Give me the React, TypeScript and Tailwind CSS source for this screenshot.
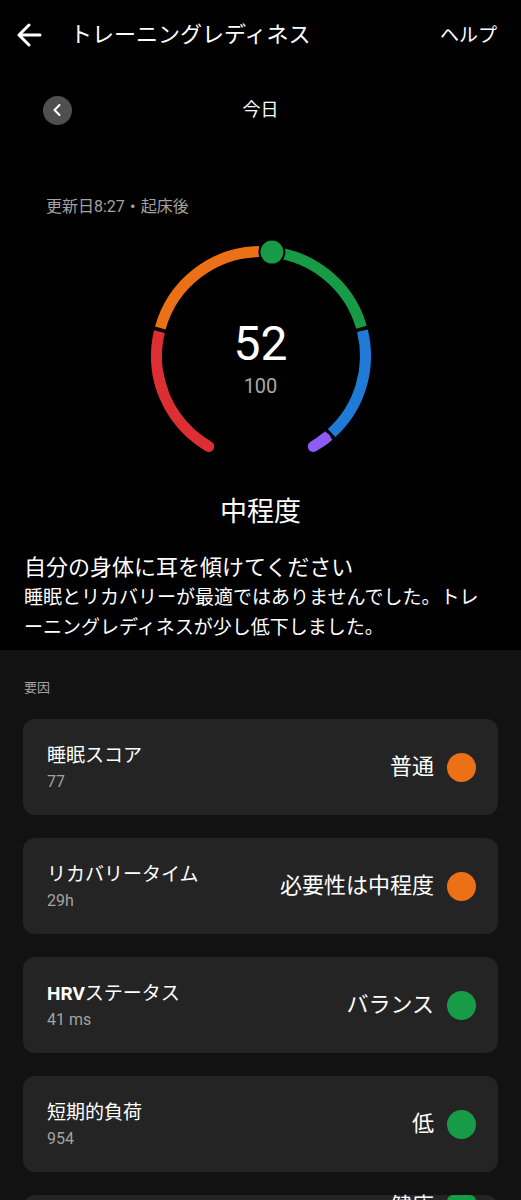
import { ChevronLeft } from "lucide-react";

const CX = 120;
const CY = 120;
const R = 104.5;

function pt(deg: number) {
  const a = (deg * Math.PI) / 180;
  return `${(CX + R * Math.sin(a)).toFixed(2)} ${(CY - R * Math.cos(a)).toFixed(2)}`;
}

function arc(from: number, to: number) {
  const large = to - from > 180 ? 1 : 0;
  return `M ${pt(from)} A ${R} ${R} 0 ${large} 1 ${pt(to)}`;
}

const factors = [
  { name: "睡眠スコア", value: "77", status: "普通", color: "bg-[#ec7016]" },
  { name: "リカバリータイム", value: "29h", status: "必要性は中程度", color: "bg-[#ec7016]" },
  { name: "HRVステータス", value: "41 ms", status: "バランス", color: "bg-[#179b47]" },
  { name: "短期的負荷", value: "954", status: "低", color: "bg-[#179b47]" },
];

function Gauge() {
  const a = (6 * Math.PI) / 180;
  const dot = { x: CX + R * Math.sin(a), y: CY - R * Math.cos(a) };
  return (
    <div className="relative mx-auto w-[240px] h-[240px]">
      <svg width="240" height="240" viewBox="0 0 240 240" fill="none">
        <path d={arc(-150, -100)} stroke="#dc2f33" strokeWidth="11" strokeLinecap="round" />
        <path d={arc(-110, -76.5)} stroke="#dc2f33" strokeWidth="11" />
        <path d={arc(-74.5, -1)} stroke="#ec7016" strokeWidth="11" />
        <path d={arc(1, 74)} stroke="#179b47" strokeWidth="11" />
        <path d={arc(76, 137.5)} stroke="#1f7ad8" strokeWidth="11" />
        <path d={arc(139.5, 145)} stroke="#8c5cf5" strokeWidth="11" />
        <path d={arc(142, 150)} stroke="#8c5cf5" strokeWidth="11" strokeLinecap="round" />
        <circle cx={dot.x} cy={dot.y} r="13.5" fill="#000" />
        <circle cx={dot.x} cy={dot.y} r="11.5" fill="#179b47" />
      </svg>
      <div className="absolute inset-0 flex flex-col items-center pt-[82px]">
        <span className="text-[48px] leading-[52px] text-white font-['Roboto',sans-serif]">52</span>
        <span className="text-[20px] leading-[24px] text-[#a8a8a8] font-['Roboto',sans-serif] mt-[4px]">100</span>
      </div>
    </div>
  );
}

export default function App() {
  return (
    <div className="w-[521px] min-h-[1200px] bg-[#121212] text-white font-['Roboto','Noto_Sans_CJK_JP',sans-serif]">
      <div className="bg-black pb-[7px]">
        {/* header */}
        <div className="h-[70px] flex items-center pl-[17px] pr-[24px]">
          <svg width="25" height="24" viewBox="0 0 25 24" fill="none" stroke="white" strokeWidth="3" strokeLinecap="round" strokeLinejoin="round">
            <path d="M23 12H3" />
            <path d="M12 2 2 12l10 10" />
          </svg>
          <h1 className="ml-[28px] text-[22px] leading-none">トレーニングレディネス</h1>
          <span className="ml-auto text-[19px] leading-none">ヘルプ</span>
        </div>

        {/* date row */}
        <div className="h-[80px] grid grid-cols-[1fr_auto_1fr] items-center px-[43px]">
          <div className="w-[29px] h-[29px] rounded-full bg-[#4f4f4f] flex items-center justify-center">
            <ChevronLeft size={20} strokeWidth={2.5} className="text-white -ml-[1px]" />
          </div>
          <span className="text-[18px] leading-none">今日</span>
          <div />
        </div>

        <div className="pt-[47px] pl-[46px] text-[16px] leading-[20px] text-[#a3a3a3]">更新日8:27・起床後</div>

        <div className="mt-[19px]">
          <Gauge />
        </div>

        <div className="mt-[19px] text-center text-[27px] leading-[34px]">中程度</div>

        <div className="mt-[24px] px-[24px]">
          <p className="text-[22px] leading-[30px]">自分の身体に耳を傾けてください</p>
          <p className="text-[19px] leading-[30px] [line-break:loose]">
            睡眠とリカバリーが最適ではありませんでした。トレーニングレディネスが少し低下しました。
          </p>
        </div>
      </div>

      {/* factors */}
      <div className="px-[23px] pt-[28px]">
        <div className="pl-[1px] text-[13px] leading-[20px] text-[#a3a3a3]">要因</div>
        <div className="mt-[21px] flex flex-col gap-[23px]">
          {factors.map((f) => (
            <div key={f.name} className="h-[96px] rounded-[12px] bg-[#242424] flex items-center pl-[24px] pr-[22px]">
              <div className="flex flex-col pt-[2px]">
                <span className="text-[19px] leading-[28px]">
                  {f.name.startsWith("HRV") ? (
                    <>
                      <span className="font-bold">HRV</span>ステータス
                    </>
                  ) : (
                    f.name
                  )}
                </span>
                <span className="text-[16px] leading-[24px] text-[#a3a3a3]">{f.value}</span>
              </div>
              <span className="ml-auto text-[22px] leading-none">{f.status}</span>
              <span className={`ml-[13px] w-[29px] h-[29px] rounded-full ${f.color}`} />
            </div>
          ))}
          <div className="h-[96px] rounded-[12px] bg-[#242424] flex items-start pl-[24px] pr-[22px]">
            <span className="ml-auto text-[22px] leading-none">健康</span>
            <span className="ml-[13px] w-[29px] h-[29px] rounded-[6px] bg-[#179b47]" />
          </div>
        </div>
      </div>
    </div>
  );
}
